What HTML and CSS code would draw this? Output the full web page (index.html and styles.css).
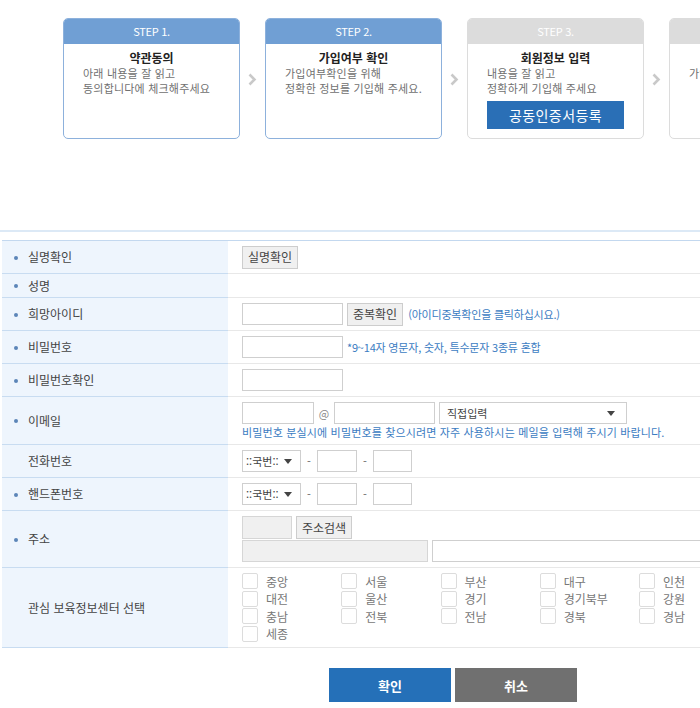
FILE: index.html
```html
<!DOCTYPE html>
<html lang="ko">
<head>
<meta charset="utf-8">
<title>회원가입</title>
<link rel="stylesheet" href="styles.css">
</head>
<body>
<div class="viewport">
<div class="page">
  <div class="steps">
    <div class="step active">
      <div class="step-head">STEP 1.</div>
      <div class="step-body">
        <div class="step-title">약관동의</div>
        <p class="step-desc">아래 내용을 잘 읽고<br>동의합니다에 체크해주세요</p>
      </div>
    </div>
    <div class="arrow"><svg width="9" height="13" viewBox="0 0 9 13"><polyline points="1.5,1.5 6.5,6.5 1.5,11.5" fill="none" stroke="#c9c9c9" stroke-width="2.6"/></svg></div>
    <div class="step active">
      <div class="step-head">STEP 2.</div>
      <div class="step-body">
        <div class="step-title">가입여부 확인</div>
        <p class="step-desc">가입여부확인을 위해<br>정확한 정보를 기입해 주세요.</p>
      </div>
    </div>
    <div class="arrow"><svg width="9" height="13" viewBox="0 0 9 13"><polyline points="1.5,1.5 6.5,6.5 1.5,11.5" fill="none" stroke="#c9c9c9" stroke-width="2.6"/></svg></div>
    <div class="step">
      <div class="step-head">STEP 3.</div>
      <div class="step-body">
        <div class="step-title">회원정보 입력</div>
        <p class="step-desc">내용을 잘 읽고<br>정확하게 기입해 주세요</p>
        <button class="cert-btn" type="button">공동인증서등록</button>
      </div>
    </div>
    <div class="arrow"><svg width="9" height="13" viewBox="0 0 9 13"><polyline points="1.5,1.5 6.5,6.5 1.5,11.5" fill="none" stroke="#c9c9c9" stroke-width="2.6"/></svg></div>
    <div class="step">
      <div class="step-head">STEP 4.</div>
      <div class="step-body">
        <div class="step-title">가입완료</div>
        <p class="step-desc">가입이 완료되었습니다.</p>
      </div>
    </div>
  </div>

  <div class="rule"></div>

  <table class="form">
    <tr class="r-name-check">
      <th class="req"><span class="dot"></span>실명확인</th>
      <td><button class="btn" type="button">실명확인</button></td>
    </tr>
    <tr class="r-name">
      <th class="req"><span class="dot"></span>성명</th>
      <td></td>
    </tr>
    <tr class="r-std">
      <th class="req"><span class="dot"></span>희망아이디</th>
      <td><div class="field"><span class="inp w101"></span><button class="btn" type="button">중복확인</button><span class="help ml1">(아이디중복확인을 클릭하십시요.)</span></div></td>
    </tr>
    <tr class="r-pw">
      <th class="req"><span class="dot"></span>비밀번호</th>
      <td><div class="field"><span class="inp w101"></span><span class="help">*9~14자 영문자, 숫자, 특수문자 3종류 혼합</span></div></td>
    </tr>
    <tr class="r-std">
      <th class="req"><span class="dot"></span>비밀번호확인</th>
      <td><div class="field"><span class="inp w101"></span></div></td>
    </tr>
    <tr class="r-email">
      <th class="req"><span class="dot"></span>이메일</th>
      <td>
        <div class="field"><span class="inp w72"></span><span class="at">@</span><span class="inp w101"></span><span class="sel w188"><span class="sel-text">직접입력</span><span class="caret"></span></span></div>
        <div class="help help-line">비밀번호 분실시에 비밀번호를 찾으시려면 자주 사용하시는 메일을 입력해 주시기 바랍니다.</div>
      </td>
    </tr>
    <tr class="r-std">
      <th><span class="dot off"></span>전화번호</th>
      <td><div class="field"><span class="sel w59"><span class="sel-text">::국번::</span><span class="caret"></span></span><span class="dash">-</span><span class="inp w40"></span><span class="dash">-</span><span class="inp w39"></span></div></td>
    </tr>
    <tr class="r-std">
      <th class="req"><span class="dot"></span>핸드폰번호</th>
      <td><div class="field"><span class="sel w59"><span class="sel-text">::국번::</span><span class="caret"></span></span><span class="dash">-</span><span class="inp w40"></span><span class="dash">-</span><span class="inp w39"></span></div></td>
    </tr>
    <tr class="r-addr">
      <th class="req"><span class="dot"></span>주소</th>
      <td>
        <div class="field"><span class="inp w50 gray h23"></span><button class="btn" type="button">주소검색</button></div>
        <div class="field line2"><span class="inp w186 gray"></span><span class="inp w300"></span></div>
      </td>
    </tr>
    <tr class="r-center">
      <th><span class="dot off"></span>관심 보육정보센터 선택</th>
      <td>
        <div class="checks">
          <label class="chk"><span class="box"></span>중앙</label>
          <label class="chk"><span class="box"></span>서울</label>
          <label class="chk"><span class="box"></span>부산</label>
          <label class="chk"><span class="box"></span>대구</label>
          <label class="chk"><span class="box"></span>인천</label>
          <label class="chk"><span class="box"></span>대전</label>
          <label class="chk"><span class="box"></span>울산</label>
          <label class="chk"><span class="box"></span>경기</label>
          <label class="chk"><span class="box"></span>경기북부</label>
          <label class="chk"><span class="box"></span>강원</label>
          <label class="chk"><span class="box"></span>충남</label>
          <label class="chk"><span class="box"></span>전북</label>
          <label class="chk"><span class="box"></span>전남</label>
          <label class="chk"><span class="box"></span>경북</label>
          <label class="chk"><span class="box"></span>경남</label>
          <label class="chk"><span class="box"></span>세종</label>
        </div>
      </td>
    </tr>
  </table>

  <div class="actions">
    <button class="act ok" type="button">확인</button>
    <button class="act cancel" type="button">취소</button>
  </div>
</div>
</div>
</body>
</html>
```

FILE: styles.css
```css
* { box-sizing: border-box; }
html, body { margin: 0; padding: 0; background: #fff; }
body {
  font-family: "Noto Sans CJK KR", "Noto Sans", sans-serif;
  font-size: 12px;
  color: #444;
}
.viewport { width: 700px; height: 708px; overflow: hidden; }
.page { width: 906px; }

/* steps */
.steps {
  display: flex;
  align-items: flex-start;
  padding: 18px 0 0 63px;
}
.step {
  flex: 0 0 177px;
  height: 121px;
  border: 1px solid #dcdcdc;
  border-radius: 5px;
  overflow: hidden;
  background: #fff;
}
.step.active { border-color: #8db1dc; }
.step-head {
  height: 25px;
  line-height: 25px;
  text-align: center;
  color: #fff;
  font-size: 11px;
  letter-spacing: -0.3px;
  background: #dcdcdc;
}
.step.active .step-head { background: #709fd4; }
.step-body { padding: 6px 0 0 19px; }
.step-title {
  margin-left: -19px;
  text-align: center;
  font-weight: bold;
  color: #222;
  font-size: 12px;
  line-height: 15px;
}
.step-desc {
  margin: 1px 0 0;
  font-size: 11px;
  line-height: 15px;
  color: #707070;
  letter-spacing: 0.2px;
  white-space: nowrap;
}
.cert-btn {
  display: block;
  margin-top: 5px;
  width: 137px;
  height: 28px;
  border: 0;
  background: #2a6fb6;
  color: #fff;
  font-family: inherit;
  font-size: 14px;
  letter-spacing: 0.4px;
  padding: 0;
}
.arrow {
  flex: 0 0 25px;
  display: flex;
  justify-content: center;
  padding-top: 55px;
}

.rule {
  margin-top: 91px;
  height: 2px;
  background: #dce9f6;
}

/* form table */
.form {
  margin: 8px 0 0 2px;
  width: 902px;
  border-collapse: collapse;
  border-top: 1px solid #c3d8ef;
}
.form th {
  width: 226px;
  background: #eef5fd;
  border-bottom: 1px solid #c8dcf1;
  text-align: left;
  font-weight: normal;
  color: #444;
  padding: 0 0 0 12px;
  vertical-align: middle;
  font-size: 12px;
  line-height: 16px;
  white-space: nowrap;
}
.form td {
  border-bottom: 1px solid #e8e8e8;
  padding: 0 0 0 14px;
  vertical-align: middle;
}
.dot {
  display: inline-block;
  width: 4px;
  height: 4px;
  border-radius: 50%;
  background: #5b85b8;
  margin: 0 10px 2px 0;
  vertical-align: middle;
}
.dot.off { visibility: hidden; }

.r-name-check { height: 33px; }
.r-name { height: 24px; }
.r-std { height: 33px; }
.r-pw { height: 33px; }
.r-email { height: 48px; }
.r-addr { height: 57px; }
.r-center { height: 80px; }

.field { display: flex; align-items: center; gap: 4px; }
.line2 { margin-top: 1px; }
.inp {
  display: block;
  height: 22px;
  border: 1px solid #cfcfcf;
  background: #fff;
}
.inp.gray { background: #f0f0f0; border-color: #d6d6d6; }
.h23 { height: 23px; }
.w39 { width: 39px; }
.w40 { width: 40px; }
.w50 { width: 50px; }
.w72 { width: 72px; }
.w101 { width: 101px; }
.w186 { width: 186px; }
.w300 { width: 300px; }
.w59 { width: 59px; }
.w188 { width: 188px; }

.btn {
  height: 23px;
  padding: 0 5px;
  border: 1px solid #cdcdcd;
  background: #f0f0f0;
  font-family: inherit;
  font-size: 12px;
  color: #444;
  line-height: 20px;
}
.help {
  font-size: 11px;
  color: #3b7cc2;
  letter-spacing: -0.2px;
  white-space: nowrap;
}
.ml1 { margin-left: 1px; }
.help-line { margin-top: 1px; line-height: 14px; letter-spacing: 0.15px; }
.at { font-size: 11px; color: #888; width: 12px; text-align: center; }
.dash { font-size: 11px; color: #666; width: 8px; text-align: center; }

.sel {
  display: flex;
  align-items: center;
  justify-content: space-between;
  height: 22px;
  border: 1px solid #cfcfcf;
  background: #fff;
  padding: 0 8px 0 3px;
  font-size: 11px;
  color: #444;
}
.w188 { padding-left: 7px; padding-right: 11px; }
.caret {
  width: 0;
  height: 0;
  border-left: 4px solid transparent;
  border-right: 4px solid transparent;
  border-top: 5px solid #444;
}

.checks {
  display: grid;
  grid-template-columns: repeat(5, 99.25px);
  grid-auto-rows: 17.5px;
  padding: 1px 0;
}
.chk {
  display: flex;
  align-items: center;
  font-size: 12px;
  color: #777;
}
.box {
  width: 16px;
  height: 16px;
  border: 1px solid #dcdcdc;
  border-radius: 2px;
  background: #fff;
  margin-right: 8px;
}

.actions {
  display: flex;
  justify-content: center;
  gap: 4px;
  margin-top: 20px;
}
.act {
  width: 122px;
  height: 34px;
  border: 0;
  color: #fff;
  font-family: inherit;
  font-size: 13px;
  font-weight: bold;
}
.ok { background: #2570b8; }
.cancel { background: #707070; }
```
